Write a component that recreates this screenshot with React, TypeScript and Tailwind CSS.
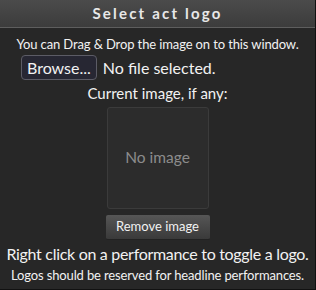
import React from "react";

export default function App() {
  return (
    <div className="w-[316px] h-[290px] bg-[#272727] border-r border-b border-[#111] flex flex-col text-[#f2f2f2] whitespace-nowrap" style={{ fontFamily: 'Lato, "Noto Sans", sans-serif' }}>
      <div className="h-[28px] shrink-0 bg-gradient-to-b from-[#4b4b4b] to-[#3c3c3c] border-b border-[#5e5e5e] flex items-center justify-center">
        <span className="text-[15px] font-bold tracking-[2.2px] text-[#e8e8e8]">Select act logo</span>
      </div>
      <div className="flex flex-col items-center">
        <div className="text-[13px] mt-[7px] leading-[18px] tracking-[-0.12px]">You can Drag &amp; Drop the image on to this window.</div>
        <div className="flex items-center gap-[6px] mt-[2px] self-start ml-[21px]">
          <div className="h-[25px] px-[5px] rounded-[4px] bg-[#272733] border border-[#5c5c66] text-[16px] flex items-center">Browse...</div>
          <span className="text-[16px]">No file selected.</span>
        </div>
        <div className="text-[15px] mt-[3px] leading-[20px]">Current image, if any:</div>
        <div className="mt-[4px] w-[102px] h-[102px] rounded-[3px] bg-[#2c2c2c] border border-[#3b3b3b] flex items-center justify-center text-[15.5px] text-[#8c8c8c]">No image</div>
        <div className="mt-[6px] w-[104px] h-[25px] rounded-[2px] bg-gradient-to-b from-[#565656] to-[#3a3a3a] border-b border-[#222] flex items-center justify-center text-[13px]">Remove image</div>
        <div className="text-[16px] mt-[3px] leading-[22px] tracking-[-0.3px]">Right click on a performance to toggle a logo.</div>
        <div className="text-[13px] mt-[1px] leading-[18px] tracking-[-0.14px]">Logos should be reserved for headline performances.</div>
      </div>
    </div>
  );
}
